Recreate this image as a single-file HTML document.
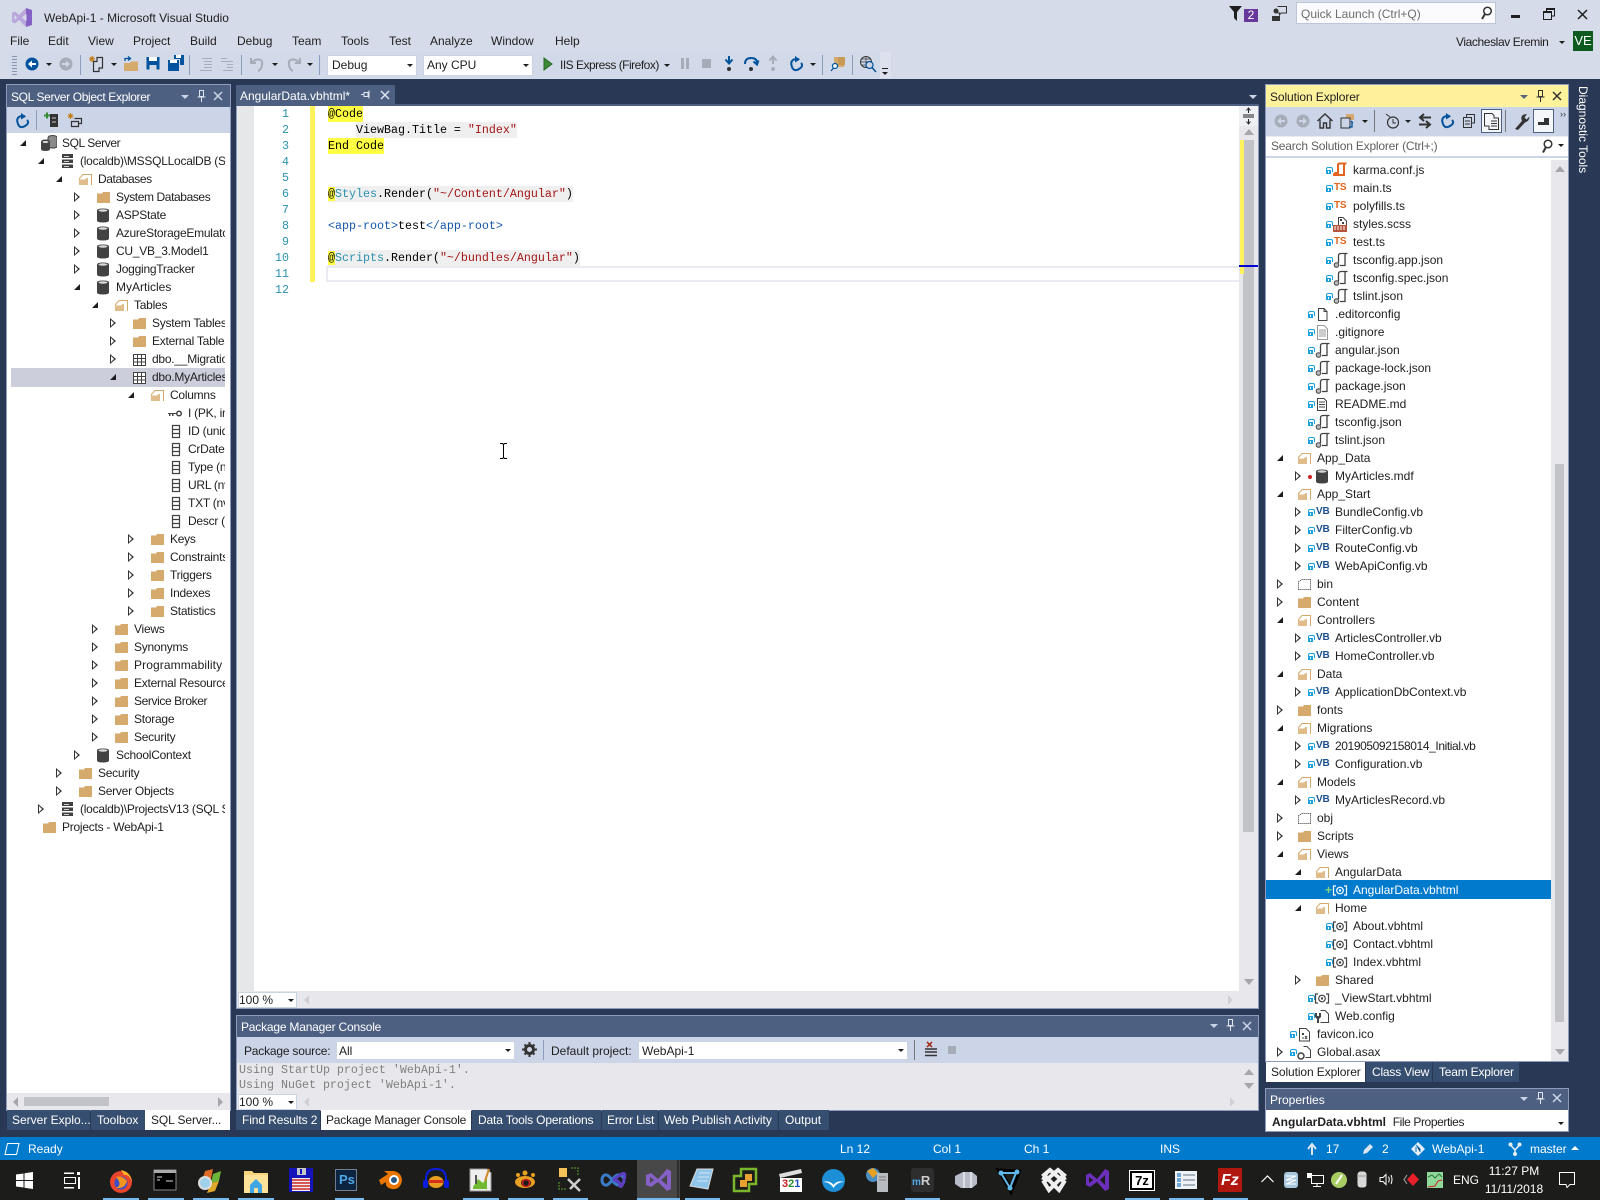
<!DOCTYPE html>
<html lang="en"><head><meta charset="utf-8"><title>WebApi-1 - Microsoft Visual Studio</title>
<style>
*{box-sizing:border-box}
html,body{margin:0;padding:0}
body{width:1600px;height:1200px;overflow:hidden;background:#293955;font:12px/16px "Liberation Sans",sans-serif;color:#1e1e1e;position:relative}
.a{position:absolute;white-space:nowrap}
.b{position:absolute}
svg{position:absolute;overflow:visible}
.w{color:#fff}
.t{position:absolute;height:18px;line-height:18px;white-space:nowrap;color:#1e1e1e}
.t i{position:absolute;display:block}
.lt .t{letter-spacing:-.25px}
.e{left:-42px;top:6px;width:6px;height:6px;background:#1e1e1e;clip-path:polygon(100% 0,100% 100%,0 100%)}
.c{left:-42px;top:4px;width:0;height:0;border-left:6px solid #333;border-top:5px solid transparent;border-bottom:5px solid transparent}
.c:after{content:"";position:absolute;left:-5px;top:-3px;border-left:3px solid #fff;border-top:3px solid transparent;border-bottom:3px solid transparent}
.rt .e,.rt .c{left:-40px}
.t svg{left:-21px;top:1px;width:16px;height:16px}
.k{position:absolute;left:-27px;top:9px;width:5px;height:4px;background:#1ba1e2}
.k:before{content:"";position:absolute;left:0;top:-3px;width:5px;height:4px;border:1px solid #1ba1e2;border-bottom:0;border-radius:2px 2px 0 0}
.k:after{content:"";position:absolute;left:2px;top:1px;width:1px;height:2px;background:#fff}
em{position:absolute;left:-19px;top:0;font:bold 10px/18px "Liberation Sans",sans-serif;letter-spacing:-.2px}
.ts{color:#e2641e}
.vb{color:#1c4f8e}
.cd{position:absolute;left:328px;height:16px;font:11.67px/16px "Liberation Mono",monospace;white-space:pre;color:#000}
.ln{position:absolute;left:260px;width:29px;text-align:right;height:16px;font:11.67px/16px "Liberation Mono",monospace;color:#2b91af}
.tab{position:absolute;top:1110px;height:20px;background:#364e6f;color:#fff;line-height:20px;padding-left:5px;white-space:nowrap}
.act{background:#fff;color:#1e1e1e}
.sep{position:absolute;width:1px;background:#8e9bbc}
.tri{position:absolute;width:0;height:0;border-left:3px solid transparent;border-right:3px solid transparent;border-top:3px solid #1e1e1e}
.ul{position:absolute;top:1198px;height:2px;background:#76b9ed}
</style></head><body>
<svg width="0" height="0" style="left:0;top:0"><defs>
<symbol id="f" viewBox="0 0 16 16"><path d="M2 4.500 L7 4.500 L8 3 L15 3 L15 14 L2 14Z" fill="#d6aa6c"/></symbol>
<symbol id="o" viewBox="0 0 16 16"><path d="M2.500 14V7.500L6 3.500H14.500V14" fill="none" stroke="#d6aa6c"/><path d="M2 14V8.500H8L9.500 7H11V14Z" fill="#e0bc8a"/></symbol>
<symbol id="d" viewBox="0 0 16 16"><path d="M2 3.500Q2 1.500 8 1.500T14 3.500V13.500Q14 15.500 8 15.500T2 13.500Z" fill="#424242"/><ellipse cx="8" cy="3.500" rx="4.500" ry="1.300" fill="#d8d8d8"/></symbol>
<symbol id="s" viewBox="0 0 16 16"><rect x="3" y="1" width="11" height="14" fill="#424242"/><rect x="3" y="5" width="11" height="1.500" fill="#fff"/><rect x="3" y="10" width="11" height="1.500" fill="#fff"/><rect x="5" y="3" width="5" height="1" fill="#ccc"/><rect x="5" y="8" width="5" height="1" fill="#ccc"/><rect x="5" y="13" width="5" height="1" fill="#ccc"/></symbol>
<symbol id="q" viewBox="0 0 16 16"><path d="M7 3Q7 .5 11.500 .5T16 3V11Q16 13 11.500 13T7 11Z" fill="#8a8a8a" stroke="#424242"/><path d="M0 7Q0 4.500 4.500 4.500T9 7V14Q9 16 4.500 16T0 14Z" fill="#424242"/><ellipse cx="4.500" cy="7" rx="3" ry="1" fill="#ddd"/></symbol>
<symbol id="tb" viewBox="0 0 16 16"><path d="M2.500 3.500H14.500V14.500H2.500ZM2.500 7.500H14.500M2.500 11H14.500M6.500 3.500V14.500M10.500 3.500V14.500" fill="#fff" stroke="#424242"/></symbol>
<symbol id="cl" viewBox="0 0 16 16"><path d="M5.500 2.500H12.500V14.500H5.500ZM5.500 6.500H12.500M5.500 10.500H12.500" fill="#fff" stroke="#424242" stroke-width="1.200"/></symbol>
<symbol id="ky" viewBox="0 0 16 16"><circle cx="12" cy="8.500" r="2.300" fill="none" stroke="#424242" stroke-width="1.500"/><path d="M1 8H10V9H1ZM2 9H3.500V11H2ZM5 9H6.500V11H5Z" fill="#424242"/></symbol>
<symbol id="jn" viewBox="0 0 16 16"><path d="M6.500 11V4Q6.500 1.500 9 1.500H15.500M14 1.500Q13 1.500 13 3.500V13.500H8" fill="none" stroke="#424242" stroke-width="1.300"/><circle cx="4.500" cy="13" r="2.300" fill="#bbb" stroke="#424242"/></symbol>
<symbol id="ka" viewBox="0 0 16 16"><path d="M6 12V3Q6 1.500 7.500 1.500H14.500M13 1.500Q12 1.500 12 3.500V13H2Q2 11 4 11H7" fill="none" stroke="#e2641e" stroke-width="2"/></symbol>
<symbol id="dc" viewBox="0 0 16 16"><path d="M4.500 2.500H10L13 5.500V14.500H4.500ZM10 2.500V5.500H13" fill="#fff" stroke="#424242"/></symbol>
<symbol id="gi" viewBox="0 0 16 16"><path d="M3.500 1.500H10L13.500 5V15.500H3.500Z" fill="#fff" stroke="#999"/><path d="M5 6H12M5 8H12M5 10H12M5 12H12" stroke="#999"/></symbol>
<symbol id="rd" viewBox="0 0 16 16"><path d="M3.500 2.500H10L12.500 5V14.500H3.500Z" fill="#fff" stroke="#424242"/><path d="M5 6H11M5 8.500H11M5 11H11" stroke="#424242"/></symbol>
<symbol id="sa" viewBox="0 0 16 16"><path d="M6.500 1.500H11L14.500 5V10H6.500Z" fill="#fff" stroke="#424242"/><rect x="8" y="3" width="2" height="2" fill="#424242"/><rect x="10" y="6" width="2" height="2" fill="#424242"/><rect x="1" y="9" width="14" height="7" fill="#b5533c"/><path d="M2 11H14M2 13H14" stroke="#fff" stroke-dasharray="2 1"/></symbol>
<symbol id="rz" viewBox="0 0 16 16"><path d="M4 4H1.500V13H4M12 4H14.500V13H12" fill="none" stroke="#424242" stroke-width="1.200"/><circle cx="8" cy="8.500" r="3.300" fill="none" stroke="#424242" stroke-width="1.200"/><circle cx="8" cy="8.500" r="1.200" fill="#424242"/></symbol>
<symbol id="rw" viewBox="0 0 16 16"><path d="M4 4H1.500V13H4M12 4H14.500V13H12" fill="none" stroke="#fff" stroke-width="1.200"/><circle cx="8" cy="8.500" r="3.300" fill="none" stroke="#fff" stroke-width="1.200"/><circle cx="8" cy="8.500" r="1.200" fill="#fff"/></symbol>
<symbol id="cg" viewBox="0 0 16 16"><path d="M6.500 2.500H11L14.500 6V14.500H6.500" fill="#fff" stroke="#424242"/><path d="M1 5H3V8H5V5H7V9L5 11V15H3V11L1 9Z" fill="#424242"/></symbol>
<symbol id="ic" viewBox="0 0 16 16"><path d="M3.500 2.500H10L13.500 6V15H3.500Z" fill="#fff" stroke="#424242"/><rect x="6" y="7" width="2" height="2" fill="#424242"/><path d="M9 10L11 13M11 10L9 13M6 12H8" stroke="#424242"/></symbol>
<symbol id="as" viewBox="0 0 16 16"><path d="M7.500 2.500H11L14.500 6V13.500H9.500" fill="#fff" stroke="#424242"/><circle cx="5" cy="12" r="3" fill="#fff" stroke="#424242" stroke-width="1.500"/></symbol>
<symbol id="bi" viewBox="0 0 16 16"><path d="M2.500 6L5.500 3.500H14.500V13.500H2.500Z" fill="#fff" stroke="#333" stroke-dasharray="1 1"/></symbol>
</defs></svg>

<!-- title bar -->
<div class="b" style="left:0;top:0;width:1600px;height:79px;background:#d6dbe9"></div>
<svg style="left:11px;top:7px" width="22" height="21" viewBox="0 0 22 21"><path d="M1 6L4 4.500L8 8L15 1V7L11 10.500L15 14V20L8 13L4 16.500L1 15Z" fill="#b9a6dc"/><path d="M15 1L21 3V18L15 20V14L15.500 13.500V7.500L15 7Z" fill="#8661c5"/><path d="M3.500 8V13L6 10.500Z" fill="#d6dbe9"/></svg>
<div class="a" style="left:44px;top:10px">WebApi-1 - Microsoft Visual Studio</div>
<div class="a" style="left:10px;top:33px">File</div>
<div class="a" style="left:48px;top:33px">Edit</div>
<div class="a" style="left:88px;top:33px">View</div>
<div class="a" style="left:133px;top:33px">Project</div>
<div class="a" style="left:190px;top:33px">Build</div>
<div class="a" style="left:237px;top:33px">Debug</div>
<div class="a" style="left:292px;top:33px">Team</div>
<div class="a" style="left:341px;top:33px">Tools</div>
<div class="a" style="left:389px;top:33px">Test</div>
<div class="a" style="left:430px;top:33px">Analyze</div>
<div class="a" style="left:491px;top:33px">Window</div>
<div class="a" style="left:555px;top:33px">Help</div>

<svg style="left:1229px;top:6px" width="14" height="15" viewBox="0 0 14 15"><path d="M0 0H13L8 6V15L5 12V6Z" fill="#1e1e1e"/></svg>
<div class="a w" style="left:1244px;top:9px;width:14px;height:13px;background:#68379c;text-align:center;line-height:13px">2</div>
<svg style="left:1271px;top:6px" width="17" height="15" viewBox="0 0 17 15"><circle cx="5" cy="5" r="2.500" fill="#333"/><path d="M1 15V10H9V15Z" fill="#333"/><path d="M6.500 .5H15.500V7H10L8.500 9V7H6.500" fill="none" stroke="#333"/></svg>
<div class="b" style="left:1296px;top:2px;width:200px;height:22px;background:#fbfbfd;border:1px solid #bcc5d9"></div>
<div class="a" style="left:1301px;top:6px;color:#6d6d6d">Quick Launch (Ctrl+Q)</div>
<svg style="left:1479px;top:6px" width="14" height="14" viewBox="0 0 14 14"><circle cx="8.500" cy="5" r="3.800" fill="none" stroke="#333" stroke-width="1.500"/><path d="M6 8L3 13" stroke="#333" stroke-width="2"/></svg>
<div class="b" style="left:1511px;top:15px;width:9px;height:3px;background:#1e1e1e"></div>
<svg style="left:1543px;top:8px" width="12" height="12" viewBox="0 0 12 12"><path d="M3.500 3V.5H11.500V8H9M.5 3.500H8.500V11.500H.5Z" fill="none" stroke="#1e1e1e"/><path d="M0 3H9V5H0ZM3 0H12V2H3Z" fill="#1e1e1e"/></svg>
<svg style="left:1577px;top:9px" width="11" height="11" viewBox="0 0 11 11"><path d="M1 1L10 10M10 1L1 10" stroke="#1e1e1e" stroke-width="1.500"/></svg>
<div class="a" style="left:1456px;top:34px;letter-spacing:-.4px">Viacheslav Eremin</div>
<div class="tri" style="left:1559px;top:41px"></div>
<div class="a w" style="left:1573px;top:31px;width:20px;height:20px;background:#0c5a1e;text-align:center;line-height:19px;font-size:13px">VE</div>

<!-- main toolbar -->
<div class="b" style="left:9px;top:52px;width:871px;height:26px;background:#d2d9e8"></div>
<div class="b" style="left:880px;top:52px;width:11px;height:26px;background:#dde1ed"></div>
<div class="b" style="left:12px;top:56px;width:5px;height:20px;background:repeating-linear-gradient(#8a94aa 0 1px,transparent 1px 3px)"></div>
<svg style="left:24px;top:56px" width="16" height="16" viewBox="0 0 16 16"><circle cx="8" cy="8" r="6.500" fill="#00539c"/><path d="M12 7H8V4.500L4 8L8 11.500V9H12Z" fill="#fff"/></svg>
<div class="tri" style="left:46px;top:63px"></div>
<svg style="left:58px;top:56px" width="16" height="16" viewBox="0 0 16 16"><circle cx="8" cy="8" r="6.500" fill="#a6adb9"/><path d="M4 7H8V4.500L12 8L8 11.500V9H4Z" fill="#cfd6e6"/></svg>
<div class="sep" style="left:80px;top:55px;height:20px"></div>
<svg style="left:88px;top:55px" width="17" height="18" viewBox="0 0 17 18"><path d="M5.500 6.500H9V2.500H14.500V13H11V16.500H5.500Z" fill="none" stroke="#333" stroke-width="1.200"/><path d="M4 1V7M1 4H7M2 2L6 6M6 2L2 6" stroke="#c27d1a" stroke-width="1.100"/></svg>
<div class="tri" style="left:111px;top:63px"></div>
<svg style="left:123px;top:56px" width="16" height="16" viewBox="0 0 16 16"><path d="M1 15V7H7L8 5.500H15V15Z" fill="#d6aa6c"/><path d="M2 5V2.500H7M5 .5L7.500 2.500L5 4.500" fill="none" stroke="#00539c" stroke-width="1.300"/></svg>
<svg style="left:146px;top:56px" width="14" height="14" viewBox="0 0 14 14"><path d="M.5 1H13.500V13.500H.5Z" fill="#00539c"/><rect x="3" y="1" width="8" height="4" fill="#fff"/><rect x="3.500" y="9" width="7" height="4.500" fill="#cfd6e6"/></svg>
<svg style="left:168px;top:55px" width="16" height="16" viewBox="0 0 16 16"><path d="M6 0H16V10H12V4H6Z" fill="#00539c"/><rect x="8" y="0" width="5" height="3" fill="#fff"/><rect x="0" y="5" width="11" height="11" fill="#00539c"/><rect x="2" y="5" width="7" height="3" fill="#fff"/></svg>
<div class="sep" style="left:189px;top:55px;height:20px"></div>
<svg style="left:199px;top:57px" width="14" height="14" viewBox="0 0 14 14"><path d="M3 1.500H13M5 4.500H13M5 7.500H13M5 10.500H13M1 13.500H13" stroke="#a6adb9"/></svg>
<svg style="left:220px;top:57px" width="14" height="14" viewBox="0 0 14 14"><path d="M1 1.500H7M1 4.500H13M7 7.500H13M7 10.500H13M3 13.500H13" stroke="#a6adb9"/></svg>
<div class="sep" style="left:241px;top:55px;height:20px"></div>
<svg style="left:250px;top:56px" width="15" height="16" viewBox="0 0 15 16"><path d="M1 2V7H6M2 6.500Q5 3 9 3.500T12 9T8 15" fill="none" stroke="#a6adb9" stroke-width="2"/></svg>
<div class="tri" style="left:272px;top:63px"></div>
<svg style="left:286px;top:56px" width="15" height="16" viewBox="0 0 15 16"><path d="M14 2V7H9M13 6.500Q10 3 6 3.500T3 9T7 15" fill="none" stroke="#a6adb9" stroke-width="2"/></svg>
<div class="tri" style="left:307px;top:63px"></div>
<div class="sep" style="left:319px;top:55px;height:20px"></div>
<div class="b" style="left:327px;top:55px;width:90px;height:21px;background:#fff;border:1px solid #ccd3e2"></div>
<div class="a" style="left:332px;top:57px">Debug</div>
<div class="tri" style="left:407px;top:64px"></div>
<div class="b" style="left:423px;top:55px;width:110px;height:21px;background:#fff;border:1px solid #ccd3e2"></div>
<div class="a" style="left:427px;top:57px">Any CPU</div>
<div class="tri" style="left:523px;top:64px"></div>
<svg style="left:543px;top:57px" width="10" height="14" viewBox="0 0 10 14"><path d="M1 1L9 7L1 13Z" fill="#388a34" stroke="#2a6b28"/></svg>
<div class="a" style="left:560px;top:57px;letter-spacing:-.5px">IIS Express (Firefox)</div>
<div class="tri" style="left:664px;top:64px"></div>
<div class="b" style="left:681px;top:58px;width:3px;height:11px;background:#a6adb9"></div><div class="b" style="left:686px;top:58px;width:3px;height:11px;background:#a6adb9"></div>
<div class="b" style="left:702px;top:59px;width:9px;height:9px;background:#a6adb9"></div>
<svg style="left:723px;top:56px" width="12" height="16" viewBox="0 0 12 16"><path d="M6 0V6M2.500 3.500L6 7.500L9.500 3.500" fill="none" stroke="#00539c" stroke-width="2"/><circle cx="6" cy="13" r="2" fill="#333"/></svg>
<svg style="left:743px;top:56px" width="16" height="16" viewBox="0 0 16 16"><path d="M2 8Q2 2 8 2T14 7M10.500 5.500L14 8.500L15.500 4.500" fill="none" stroke="#00539c" stroke-width="2"/><circle cx="8" cy="13" r="2" fill="#333"/></svg>
<svg style="left:767px;top:56px" width="12" height="16" viewBox="0 0 12 16"><path d="M6 8V1M2.500 4.500L6 .5L9.500 4.500" fill="none" stroke="#a6adb9" stroke-width="2"/><circle cx="6" cy="13" r="2" fill="#a6adb9"/></svg>
<svg style="left:789px;top:56px" width="14" height="16" viewBox="0 0 14 16"><path d="M10 3.500Q7 2 4 4T3 11T10 13T12 7" fill="none" stroke="#00539c" stroke-width="2"/><path d="M6 0L11 3.500L6 6.500Z" fill="#00539c"/></svg>
<div class="tri" style="left:810px;top:63px"></div>
<div class="sep" style="left:822px;top:55px;height:20px"></div>
<svg style="left:830px;top:56px" width="16" height="16" viewBox="0 0 16 16"><path d="M4 1H14V11H4Z" fill="#d6aa6c"/><path d="M8 1H15V9H8Z" fill="#c99a55"/><circle cx="5" cy="10" r="2.500" fill="#fff" stroke="#00539c" stroke-width="1.200"/><path d="M3.500 12L1 15" stroke="#00539c" stroke-width="1.300"/></svg>
<div class="sep" style="left:852px;top:55px;height:20px"></div>
<svg style="left:860px;top:56px" width="17" height="17" viewBox="0 0 17 17"><circle cx="6" cy="6" r="5.500" fill="none" stroke="#333"/><path d="M1 6H11M6 1V11M2 3H10M2 9H10" stroke="#333" stroke-width=".7"/><circle cx="9.500" cy="9" r="3.500" fill="#cfd6e6" stroke="#00539c" stroke-width="1.200"/><path d="M12 11.500L16 16" stroke="#00539c" stroke-width="1.500"/></svg>
<div class="b" style="left:882px;top:68px;width:6px;height:1px;background:#1e1e1e"></div><div class="tri" style="left:882px;top:72px"></div>

<!-- SQL Server Object Explorer -->
<div class="b" style="left:6px;top:84px;width:225px;height:1027px;background:#fff;border:1px solid #8e9bbc"></div>
<div class="b" style="left:7px;top:85px;width:223px;height:22px;background:#4d6082"></div>
<div class="a w" style="left:11px;top:89px;letter-spacing:-.35px">SQL Server Object Explorer</div>
<div class="b" style="left:181px;top:95px;border-left:4px solid transparent;border-right:4px solid transparent;border-top:4px solid #ccd5e8"></div>
<svg style="left:197px;top:90px" width="9" height="12" viewBox="0 0 9 12"><path d="M2.500 .5H6.500V6.500H2.500ZM.5 7H8.500M4.500 7V12" fill="none" stroke="#e0e5f0"/></svg>
<svg style="left:213px;top:91px" width="10" height="10" viewBox="0 0 10 10"><path d="M1 1L9 9M9 1L1 9" stroke="#ccd5e8" stroke-width="1.500"/></svg>
<div class="b" style="left:7px;top:107px;width:223px;height:26px;background:#ccd5e8"></div>
<svg style="left:15px;top:113px" width="14" height="16" viewBox="0 0 14 16"><path d="M10 3.500Q7 2 4 4T3 11T10 13T12 7" fill="none" stroke="#00539c" stroke-width="2"/><path d="M6 0L11 3.500L6 6.500Z" fill="#00539c"/></svg>
<div class="sep" style="left:36px;top:110px;height:20px"></div>
<svg style="left:44px;top:112px" width="16" height="16" viewBox="0 0 16 16"><rect x="6" y="2" width="8" height="13" fill="#333"/><path d="M0 3.500H6M3 .5V6.500" stroke="#388a34" stroke-width="2"/><path d="M8 6H12M8 10H12" stroke="#ccc"/></svg>
<svg style="left:67px;top:112px" width="16" height="16" viewBox="0 0 16 16"><path d="M3.500 1V7M.5 4H6.500M1.500 2L5.500 6M5.500 2L1.500 6" stroke="#c27d1a"/><path d="M7.500 6.500H14.500V11.500H12M4.500 9.500H11.500V14.500H4.500Z" fill="none" stroke="#333" stroke-width="1.200"/></svg>

<div class="b lt" style="left:0;top:0;width:225px;height:1093px;overflow:hidden">
<div class="b" style="left:11px;top:368px;width:214px;height:19px;background:#cccedb"></div>
<div class="t" style="left:62px;top:134px;letter-spacing:-.4px"><i class="e"></i><svg><use href="#q"/></svg>SQL Server</div>
<div class="t" style="left:80px;top:152px"><i class="e"></i><svg><use href="#s"/></svg>(localdb)\MSSQLLocalDB (SQL Server 13.0)</div>
<div class="t" style="left:98px;top:170px;letter-spacing:-.4px"><i class="e"></i><svg><use href="#o"/></svg>Databases</div>
<div class="t" style="left:116px;top:188px;letter-spacing:-.4px"><i class="c"></i><svg><use href="#f"/></svg>System Databases</div>
<div class="t" style="left:116px;top:206px"><i class="c"></i><svg><use href="#d"/></svg>ASPState</div>
<div class="t" style="left:116px;top:224px"><i class="c"></i><svg><use href="#d"/></svg>AzureStorageEmulatorDb</div>
<div class="t" style="left:116px;top:242px"><i class="c"></i><svg><use href="#d"/></svg>CU_VB_3.Model1</div>
<div class="t" style="left:116px;top:260px"><i class="c"></i><svg><use href="#d"/></svg>JoggingTracker</div>
<div class="t" style="left:116px;top:278px;letter-spacing:0"><i class="e"></i><svg><use href="#d"/></svg>MyArticles</div>
<div class="t" style="left:134px;top:296px"><i class="e"></i><svg><use href="#o"/></svg>Tables</div>
<div class="t" style="left:152px;top:314px"><i class="c"></i><svg><use href="#f"/></svg>System Tables</div>
<div class="t" style="left:152px;top:332px"><i class="c"></i><svg><use href="#f"/></svg>External Tables</div>
<div class="t" style="left:152px;top:350px"><i class="c"></i><svg><use href="#tb"/></svg>dbo.__MigrationHistory</div>
<div class="t" style="left:152px;top:368px"><i class="e"></i><svg><use href="#tb"/></svg>dbo.MyArticles</div>
<div class="t" style="left:170px;top:386px"><i class="e"></i><svg><use href="#o"/></svg>Columns</div>
<div class="t" style="left:188px;top:404px"><svg><use href="#ky"/></svg>I (PK, int)</div>
<div class="t" style="left:188px;top:422px"><svg><use href="#cl"/></svg>ID (uniqueidentifier)</div>
<div class="t" style="left:188px;top:440px"><svg><use href="#cl"/></svg>CrDate (date)</div>
<div class="t" style="left:188px;top:458px"><svg><use href="#cl"/></svg>Type (nvarchar)</div>
<div class="t" style="left:188px;top:476px"><svg><use href="#cl"/></svg>URL (nvarchar)</div>
<div class="t" style="left:188px;top:494px"><svg><use href="#cl"/></svg>TXT (nvarchar)</div>
<div class="t" style="left:188px;top:512px"><svg><use href="#cl"/></svg>Descr (nvarchar)</div>
<div class="t" style="left:170px;top:530px"><i class="c"></i><svg><use href="#f"/></svg>Keys</div>
<div class="t" style="left:170px;top:548px"><i class="c"></i><svg><use href="#f"/></svg>Constraints</div>
<div class="t" style="left:170px;top:566px"><i class="c"></i><svg><use href="#f"/></svg>Triggers</div>
<div class="t" style="left:170px;top:584px"><i class="c"></i><svg><use href="#f"/></svg>Indexes</div>
<div class="t" style="left:170px;top:602px"><i class="c"></i><svg><use href="#f"/></svg>Statistics</div>
<div class="t" style="left:134px;top:620px"><i class="c"></i><svg><use href="#f"/></svg>Views</div>
<div class="t" style="left:134px;top:638px"><i class="c"></i><svg><use href="#f"/></svg>Synonyms</div>
<div class="t" style="left:134px;top:656px;letter-spacing:.1px"><i class="c"></i><svg><use href="#f"/></svg>Programmability</div>
<div class="t" style="left:134px;top:674px"><i class="c"></i><svg><use href="#f"/></svg>External Resources</div>
<div class="t" style="left:134px;top:692px;letter-spacing:-.4px"><i class="c"></i><svg><use href="#f"/></svg>Service Broker</div>
<div class="t" style="left:134px;top:710px"><i class="c"></i><svg><use href="#f"/></svg>Storage</div>
<div class="t" style="left:134px;top:728px"><i class="c"></i><svg><use href="#f"/></svg>Security</div>
<div class="t" style="left:116px;top:746px"><i class="c"></i><svg><use href="#d"/></svg>SchoolContext</div>
<div class="t" style="left:98px;top:764px"><i class="c"></i><svg><use href="#f"/></svg>Security</div>
<div class="t" style="left:98px;top:782px"><i class="c"></i><svg><use href="#f"/></svg>Server Objects</div>
<div class="t" style="left:80px;top:800px"><i class="c"></i><svg><use href="#s"/></svg>(localdb)\ProjectsV13 (SQL Server)</div>
<div class="t" style="left:62px;top:818px"><svg><use href="#f"/></svg>Projects - WebApi-1</div>
</div>
<div class="b" style="left:7px;top:1093px;width:223px;height:17px;background:#e8e8ec"></div>
<div class="b" style="left:24px;top:1097px;width:85px;height:9px;background:#c2c3c9"></div>
<div class="b" style="left:13px;top:1097px;border-right:5px solid #a6a6ad;border-top:5px solid transparent;border-bottom:5px solid transparent"></div>
<div class="b" style="left:218px;top:1097px;border-left:5px solid #a6a6ad;border-top:5px solid transparent;border-bottom:5px solid transparent"></div>
<div class="tab" style="left:7px;width:83px">Server Explo...</div>
<div class="tab" style="left:91px;width:54px;padding-left:6px">Toolbox</div>
<div class="tab act" style="left:145px;width:85px;padding-left:6px;letter-spacing:-.1px">SQL Server...</div>

<!-- Editor -->
<div class="b" style="left:236px;top:85px;width:159px;height:21px;background:#4d6082"></div>
<div class="a w" style="left:240px;top:88px">AngularData.vbhtml*</div>
<svg style="left:361px;top:90px" width="10" height="10" viewBox="0 0 10 10"><path d="M3 2.500H7V6.500H3ZM0 4.500H3M8 .5V8.500" fill="none" stroke="#e0e5f0"/></svg>
<svg style="left:380px;top:90px" width="10" height="10" viewBox="0 0 10 10"><path d="M1 1L9 9M9 1L1 9" stroke="#e0e5f0" stroke-width="1.500"/></svg>
<div class="b" style="left:1249px;top:95px;border-left:4px solid transparent;border-right:4px solid transparent;border-top:4px solid #ccd5e8"></div>
<div class="b" style="left:236px;top:104px;width:1023px;height:2px;background:#4d6082"></div>
<div class="b" style="left:236px;top:106px;width:1023px;height:903px;background:#fff;border:1px solid #8e9bbc;border-top:0"></div>
<div class="b" style="left:237px;top:106px;width:17px;height:885px;background:#e6e7e8"></div>
<div class="b" style="left:310px;top:106px;width:5px;height:176px;background:#fff35c"></div>
<div class="b" style="left:326px;top:266px;width:913px;height:16px;border:2px solid #eaeaf2;border-right:0"></div>
<div class="ln" style="top:106px">1</div><div class="ln" style="top:122px">2</div><div class="ln" style="top:138px">3</div><div class="ln" style="top:154px">4</div><div class="ln" style="top:170px">5</div><div class="ln" style="top:186px">6</div><div class="ln" style="top:202px">7</div><div class="ln" style="top:218px">8</div><div class="ln" style="top:234px">9</div><div class="ln" style="top:250px">10</div><div class="ln" style="top:266px">11</div><div class="ln" style="top:282px">12</div>
<div class="cd" style="top:106px;background:#ffff44">@Code</div>
<div class="cd" style="top:122px;left:356px;background:#efefef">ViewBag.Title = <span style="color:#a31515">"Index"</span></div>
<div class="cd" style="top:138px;background:#ffff44">End Code</div>
<div class="cd" style="top:186px;background:#efefef"><span style="background:#ffff44">@</span><span style="color:#2b91af">Styles</span>.Render(<span style="color:#a31515">"~/Content/Angular"</span>)</div>
<div class="cd" style="top:218px"><span style="color:#1557a8">&lt;app-root&gt;</span>test<span style="color:#1557a8">&lt;/app-root&gt;</span></div>
<div class="cd" style="top:250px;background:#efefef"><span style="background:#ffff44">@</span><span style="color:#2b91af">Scripts</span>.Render(<span style="color:#a31515">"~/bundles/Angular"</span>)</div>
<svg style="left:500px;top:443px" width="7" height="16" viewBox="0 0 7 16"><path d="M0 .5H2.500L3.500 1.500L4.500 .5H7M3.500 1.500V14.500M0 15.500H2.500L3.500 14.500L4.500 15.500H7" fill="none" stroke="#000"/></svg>
<!-- editor scrollbar -->
<div class="b" style="left:1239px;top:106px;width:19px;height:885px;background:#e8e8ec"></div>
<div class="b" style="left:1239px;top:106px;width:19px;height:20px;background:#eef0f6"></div>
<svg style="left:1243px;top:108px" width="11" height="16" viewBox="0 0 11 16"><path d="M0 7H11M0 9H11M5.500 0V5M5.500 11V16M3.500 2.500L5.500 0L7.500 2.500M3.500 13.500L5.500 16L7.500 13.500" fill="none" stroke="#1e1e1e"/></svg>
<div class="b" style="left:1244px;top:129px;border-left:5px solid transparent;border-right:5px solid transparent;border-bottom:6px solid #a6a6ad"></div>
<div class="b" style="left:1243px;top:140px;width:11px;height:692px;background:#c2c3c9"></div>
<div class="b" style="left:1240px;top:140px;width:4px;height:134px;background:#fff35c"></div>
<div class="b" style="left:1239px;top:265px;width:19px;height:2px;background:#0000d0"></div>
<div class="b" style="left:1244px;top:979px;border-left:5px solid transparent;border-right:5px solid transparent;border-top:6px solid #a6a6ad"></div>
<!-- editor h scrollbar -->
<div class="b" style="left:237px;top:991px;width:1021px;height:17px;background:#e8e8ec"></div>
<div class="b" style="left:238px;top:992px;width:59px;height:16px;background:#fff;border:1px solid #ccd3e2"></div>
<div class="a" style="left:239px;top:992px">100 %</div><div class="tri" style="left:288px;top:999px"></div>
<div class="b" style="left:304px;top:995px;border-right:5px solid #d0d0d6;border-top:5px solid transparent;border-bottom:5px solid transparent"></div>
<div class="b" style="left:1228px;top:995px;border-left:5px solid #d0d0d6;border-top:5px solid transparent;border-bottom:5px solid transparent"></div>

<!-- Package Manager Console -->
<div class="b" style="left:236px;top:1015px;width:1023px;height:96px;background:#e8e8ec;border:1px solid #8e9bbc"></div>
<div class="b" style="left:237px;top:1016px;width:1021px;height:21px;background:#4d6082"></div>
<div class="a w" style="left:241px;top:1019px;letter-spacing:-.2px">Package Manager Console</div>
<div class="b" style="left:1210px;top:1024px;border-left:4px solid transparent;border-right:4px solid transparent;border-top:4px solid #ccd5e8"></div>
<svg style="left:1226px;top:1019px" width="9" height="12" viewBox="0 0 9 12"><path d="M2.500 .5H6.500V6.500H2.500ZM.5 7H8.500M4.500 7V12" fill="none" stroke="#e0e5f0"/></svg>
<svg style="left:1242px;top:1021px" width="10" height="10" viewBox="0 0 10 10"><path d="M1 1L9 9M9 1L1 9" stroke="#ccd5e8" stroke-width="1.500"/></svg>
<div class="b" style="left:237px;top:1037px;width:1021px;height:26px;background:#ccd5e8"></div>
<div class="a" style="left:244px;top:1043px;letter-spacing:-.2px">Package source:</div>
<div class="b" style="left:336px;top:1041px;width:179px;height:19px;background:#fff;border:1px solid #ccd3e2"></div>
<div class="a" style="left:339px;top:1043px">All</div><div class="tri" style="left:505px;top:1049px"></div>
<svg style="left:522px;top:1042px" width="15" height="15" viewBox="0 0 15 15"><circle cx="7.500" cy="7.500" r="4" fill="none" stroke="#333" stroke-width="3"/><path d="M7.500 0V3M7.500 12V15M0 7.500H3M12 7.500H15M2.500 2.500L4.500 4.500M10.500 10.500L12.500 12.500M12.500 2.500L10.500 4.500M4.500 10.500L2.500 12.500" stroke="#333" stroke-width="2"/></svg>
<div class="sep" style="left:543px;top:1040px;height:20px"></div>
<div class="a" style="left:551px;top:1043px">Default project:</div>
<div class="b" style="left:638px;top:1041px;width:270px;height:19px;background:#fff;border:1px solid #ccd3e2"></div>
<div class="a" style="left:642px;top:1043px">WebApi-1</div><div class="tri" style="left:898px;top:1049px"></div>
<div class="sep" style="left:914px;top:1040px;height:20px;background:#777"></div>
<svg style="left:924px;top:1042px" width="14" height="15" viewBox="0 0 14 15"><path d="M3 0L8 5M8 0L3 5" stroke="#a1260d" stroke-width="1.500"/><path d="M1 7H13M1 10H13M1 13.500H13" stroke="#333" stroke-width="1.500"/></svg>
<div class="b" style="left:948px;top:1046px;width:8px;height:8px;background:#a6adb9"></div>
<div class="a" style="left:239px;top:1063px;font:11.67px/15px 'Liberation Mono',monospace;color:#808080">Using StartUp project 'WebApi-1'.</div>
<div class="a" style="left:239px;top:1078px;font:11.67px/15px 'Liberation Mono',monospace;color:#808080">Using NuGet project 'WebApi-1'.</div>
<div class="b" style="left:238px;top:1094px;width:59px;height:16px;background:#fff;border:1px solid #ccd3e2"></div>
<div class="a" style="left:239px;top:1094px">100 %</div><div class="tri" style="left:288px;top:1101px"></div>
<div class="b" style="left:304px;top:1097px;border-right:5px solid #d0d0d6;border-top:5px solid transparent;border-bottom:5px solid transparent"></div>
<div class="b" style="left:1244px;top:1069px;border-left:5px solid transparent;border-right:5px solid transparent;border-bottom:6px solid #a6a6ad"></div>
<div class="b" style="left:1244px;top:1083px;border-left:5px solid transparent;border-right:5px solid transparent;border-top:6px solid #a6a6ad"></div>
<div class="b" style="left:1230px;top:1097px;border-left:5px solid #d0d0d6;border-top:5px solid transparent;border-bottom:5px solid transparent"></div>
<div class="tab" style="left:236px;width:84px;padding-left:6px;letter-spacing:-.1px">Find Results 2</div>
<div class="tab act" style="left:321px;width:150px;letter-spacing:-.2px">Package Manager Console</div>
<div class="tab" style="left:472px;width:129px;padding-left:6px;letter-spacing:-.15px">Data Tools Operations</div>
<div class="tab" style="left:602px;width:56px;padding-left:5px;letter-spacing:-.15px">Error List</div>
<div class="tab" style="left:659px;width:119px;padding-left:5px">Web Publish Activity</div>
<div class="tab" style="left:779px;width:50px;padding-left:6px">Output</div>

<!-- Solution Explorer -->
<div class="b" style="left:1265px;top:84px;width:304px;height:978px;background:#fff;border:1px solid #8e9bbc"></div>
<div class="b" style="left:1266px;top:85px;width:302px;height:22px;background:#fff29d"></div>
<div class="a" style="left:1270px;top:89px;letter-spacing:-.1px">Solution Explorer</div>
<div class="b" style="left:1520px;top:95px;border-left:4px solid transparent;border-right:4px solid transparent;border-top:4px solid #5a6478"></div>
<svg style="left:1536px;top:90px" width="9" height="12" viewBox="0 0 9 12"><path d="M2.500 .5H6.500V6.500H2.500ZM.5 7H8.500M4.500 7V12" fill="none" stroke="#333"/></svg>
<svg style="left:1552px;top:91px" width="10" height="10" viewBox="0 0 10 10"><path d="M1 1L9 9M9 1L1 9" stroke="#333" stroke-width="1.500"/></svg>
<div class="b" style="left:1266px;top:107px;width:302px;height:29px;background:#ccd5e8"></div>
<svg style="left:1274px;top:114px" width="14" height="14" viewBox="0 0 14 14"><circle cx="7" cy="7" r="6.500" fill="#a6adb9"/><path d="M11 6H7V3.500L3 7L7 10.500V8H11Z" fill="#ccd5e8"/></svg>
<svg style="left:1296px;top:114px" width="14" height="14" viewBox="0 0 14 14"><circle cx="7" cy="7" r="6.500" fill="#a6adb9"/><path d="M3 6H7V3.500L11 7L7 10.500V8H3Z" fill="#ccd5e8"/></svg>
<svg style="left:1317px;top:113px" width="16" height="16" viewBox="0 0 16 16"><path d="M.5 8L8 1L15.500 8M3 6.500V15H6.500V10H9.500V15H13V6.500" fill="none" stroke="#333" stroke-width="1.400"/></svg>
<svg style="left:1340px;top:113px" width="16" height="16" viewBox="0 0 16 16"><path d="M6 1H14V7H6Z" fill="#d6aa6c"/><rect x="1" y="5" width="9" height="10" fill="#ccd5e8" stroke="#333"/><path d="M12 9V14H9M11 8L13 10" stroke="#00539c" fill="none" stroke-width="1.300"/></svg>
<div class="tri" style="left:1362px;top:120px"></div>
<div class="sep" style="left:1374px;top:110px;height:22px;background:#777"></div>
<svg style="left:1385px;top:113px" width="14" height="16" viewBox="0 0 14 16"><circle cx="8" cy="9.500" r="5.500" fill="none" stroke="#333" stroke-width="1.200"/><path d="M8 6V10H11M1 1L5 4" stroke="#333" fill="none"/></svg>
<div class="tri" style="left:1405px;top:120px"></div>
<svg style="left:1418px;top:113px" width="14" height="16" viewBox="0 0 14 16"><path d="M13 4.500H3M6 1L2 4.500L6 8M1 11.500H11M8 8L12 11.500L8 15" fill="none" stroke="#333" stroke-width="2"/></svg>
<svg style="left:1440px;top:113px" width="14" height="16" viewBox="0 0 14 16"><path d="M10 3.500Q7 2 4 4T3 11T10 13T12 7" fill="none" stroke="#00539c" stroke-width="2"/><path d="M6 0L11 3.500L6 6.500Z" fill="#00539c"/></svg>
<svg style="left:1463px;top:114px" width="12" height="14" viewBox="0 0 12 14"><path d="M3.500 3.500V.5H11.500V9H8.500M.5 3.500H8.500V13.500H.5ZM2 7H7M2 10H7" fill="none" stroke="#333"/></svg>
<div class="b" style="left:1481px;top:109px;width:21px;height:24px;background:#f5f6fa;border:1px solid #4d6082"></div>
<svg style="left:1484px;top:113px" width="15" height="17" viewBox="0 0 15 17"><path d="M.5 .5H8L10 2.500V5H14.500V16.500H5V13H.5Z" fill="none" stroke="#333"/><path d="M7 8H13M7 10.500H13M7 13H13" stroke="#333"/></svg>
<div class="sep" style="left:1505px;top:110px;height:22px;background:#777"></div>
<svg style="left:1514px;top:113px" width="16" height="17" viewBox="0 0 16 17"><path d="M1 16L8 8Q6 3 10 1.500L13 1L10.500 4.500L12.500 6.500L15.500 3.500Q15.500 8 11 9.500L4 17Z" fill="#333"/></svg>
<div class="b" style="left:1533px;top:109px;width:21px;height:24px;background:#f5f6fa;border:1px solid #4d6082"></div>
<div class="b" style="left:1538px;top:122px;width:11px;height:3px;background:#333"></div><div class="b" style="left:1544px;top:118px;width:5px;height:5px;background:#333"></div>
<div class="a" style="left:1560px;top:110px;font-size:9px;line-height:8px;color:#333">&#8250;&#8250;</div>
<div class="b" style="left:1266px;top:136px;width:302px;height:20px;background:#fff;border-top:1px solid #e8ebf2"></div>
<div class="a" style="left:1271px;top:138px;color:#5f5f5f;letter-spacing:-.2px">Search Solution Explorer (Ctrl+;)</div>
<svg style="left:1540px;top:139px" width="13" height="14" viewBox="0 0 13 14"><circle cx="8" cy="5" r="3.800" fill="none" stroke="#333" stroke-width="1.500"/><path d="M6 8L3 13.500" stroke="#333" stroke-width="2"/></svg>
<div class="tri" style="left:1558px;top:144px"></div>
<div class="b" style="left:1266px;top:156px;width:302px;height:2px;background:#ccd5e8"></div>

<div class="b rt" style="left:0;top:0;width:1551px;height:1061px">
<div class="b" style="left:1266px;top:880px;width:285px;height:19px;background:#007acc"></div>
<div class="t" style="left:1353px;top:161px"><u class="k"></u><svg><use href="#ka"/></svg>karma.conf.js</div>
<div class="t" style="left:1353px;top:179px"><u class="k"></u><em class="ts">TS</em>main.ts</div>
<div class="t" style="left:1353px;top:197px"><u class="k"></u><em class="ts">TS</em>polyfills.ts</div>
<div class="t" style="left:1353px;top:215px"><u class="k"></u><svg><use href="#sa"/></svg>styles.scss</div>
<div class="t" style="left:1353px;top:233px"><u class="k"></u><em class="ts">TS</em>test.ts</div>
<div class="t" style="left:1353px;top:251px"><u class="k"></u><svg><use href="#jn"/></svg>tsconfig.app.json</div>
<div class="t" style="left:1353px;top:269px"><u class="k"></u><svg><use href="#jn"/></svg>tsconfig.spec.json</div>
<div class="t" style="left:1353px;top:287px"><u class="k"></u><svg><use href="#jn"/></svg>tslint.json</div>
<div class="t" style="left:1335px;top:305px"><u class="k"></u><svg><use href="#dc"/></svg>.editorconfig</div>
<div class="t" style="left:1335px;top:323px"><u class="k"></u><svg><use href="#gi"/></svg>.gitignore</div>
<div class="t" style="left:1335px;top:341px"><u class="k"></u><svg><use href="#jn"/></svg>angular.json</div>
<div class="t" style="left:1335px;top:359px"><u class="k"></u><svg><use href="#jn"/></svg>package-lock.json</div>
<div class="t" style="left:1335px;top:377px"><u class="k"></u><svg><use href="#jn"/></svg>package.json</div>
<div class="t" style="left:1335px;top:395px"><u class="k"></u><svg><use href="#rd"/></svg>README.md</div>
<div class="t" style="left:1335px;top:413px"><u class="k"></u><svg><use href="#jn"/></svg>tsconfig.json</div>
<div class="t" style="left:1335px;top:431px"><u class="k"></u><svg><use href="#jn"/></svg>tslint.json</div>
<div class="t" style="left:1317px;top:449px"><i class="e"></i><svg><use href="#o"/></svg>App_Data</div>
<div class="t" style="left:1335px;top:467px"><i class="c"></i><b class="b" style="left:-27px;top:8px;width:4px;height:4px;background:#d02020;border-radius:2px"></b><svg><use href="#d"/></svg>MyArticles.mdf</div>
<div class="t" style="left:1317px;top:485px"><i class="e"></i><svg><use href="#o"/></svg>App_Start</div>
<div class="t" style="left:1335px;top:503px"><i class="c"></i><u class="k"></u><em class="vb">VB</em>BundleConfig.vb</div>
<div class="t" style="left:1335px;top:521px"><i class="c"></i><u class="k"></u><em class="vb">VB</em>FilterConfig.vb</div>
<div class="t" style="left:1335px;top:539px"><i class="c"></i><u class="k"></u><em class="vb">VB</em>RouteConfig.vb</div>
<div class="t" style="left:1335px;top:557px"><i class="c"></i><u class="k"></u><em class="vb">VB</em>WebApiConfig.vb</div>
<div class="t" style="left:1317px;top:575px"><i class="c"></i><svg><use href="#bi"/></svg>bin</div>
<div class="t" style="left:1317px;top:593px"><i class="c"></i><svg><use href="#f"/></svg>Content</div>
<div class="t" style="left:1317px;top:611px"><i class="e"></i><svg><use href="#o"/></svg>Controllers</div>
<div class="t" style="left:1335px;top:629px"><i class="c"></i><u class="k"></u><em class="vb">VB</em>ArticlesController.vb</div>
<div class="t" style="left:1335px;top:647px"><i class="c"></i><u class="k"></u><em class="vb">VB</em>HomeController.vb</div>
<div class="t" style="left:1317px;top:665px"><i class="e"></i><svg><use href="#o"/></svg>Data</div>
<div class="t" style="left:1335px;top:683px"><i class="c"></i><u class="k"></u><em class="vb">VB</em>ApplicationDbContext.vb</div>
<div class="t" style="left:1317px;top:701px"><i class="c"></i><svg><use href="#f"/></svg>fonts</div>
<div class="t" style="left:1317px;top:719px"><i class="e"></i><svg><use href="#o"/></svg>Migrations</div>
<div class="t" style="left:1335px;top:737px;letter-spacing:-.4px"><i class="c"></i><u class="k"></u><em class="vb" style="letter-spacing:-.2px">VB</em>201905092158014_Initial.vb</div>
<div class="t" style="left:1335px;top:755px"><i class="c"></i><u class="k"></u><em class="vb">VB</em>Configuration.vb</div>
<div class="t" style="left:1317px;top:773px"><i class="e"></i><svg><use href="#o"/></svg>Models</div>
<div class="t" style="left:1335px;top:791px"><i class="c"></i><u class="k"></u><em class="vb">VB</em>MyArticlesRecord.vb</div>
<div class="t" style="left:1317px;top:809px"><i class="c"></i><svg><use href="#bi"/></svg>obj</div>
<div class="t" style="left:1317px;top:827px"><i class="c"></i><svg><use href="#f"/></svg>Scripts</div>
<div class="t" style="left:1317px;top:845px"><i class="e"></i><svg><use href="#o"/></svg>Views</div>
<div class="t" style="left:1335px;top:863px"><i class="e"></i><svg><use href="#o"/></svg>AngularData</div>
<div class="t" style="left:1353px;top:881px;color:#fff"><span class="a" style="left:-28px;top:0;color:#7fd67f;font-weight:bold">+</span><svg><use href="#rw"/></svg>AngularData.vbhtml</div>
<div class="t" style="left:1335px;top:899px"><i class="e"></i><svg><use href="#o"/></svg>Home</div>
<div class="t" style="left:1353px;top:917px"><u class="k"></u><svg><use href="#rz"/></svg>About.vbhtml</div>
<div class="t" style="left:1353px;top:935px"><u class="k"></u><svg><use href="#rz"/></svg>Contact.vbhtml</div>
<div class="t" style="left:1353px;top:953px"><u class="k"></u><svg><use href="#rz"/></svg>Index.vbhtml</div>
<div class="t" style="left:1335px;top:971px"><i class="c"></i><svg><use href="#f"/></svg>Shared</div>
<div class="t" style="left:1335px;top:989px"><u class="k"></u><svg><use href="#rz"/></svg>_ViewStart.vbhtml</div>
<div class="t" style="left:1335px;top:1007px"><u class="k"></u><svg><use href="#cg"/></svg>Web.config</div>
<div class="t" style="left:1317px;top:1025px"><u class="k"></u><svg><use href="#ic"/></svg>favicon.ico</div>
<div class="t" style="left:1317px;top:1043px"><i class="c"></i><u class="k"></u><svg><use href="#as"/></svg>Global.asax</div>
</div>
<div class="b" style="left:1551px;top:160px;width:17px;height:901px;background:#e8e8ec"></div>
<div class="b" style="left:1555px;top:464px;width:9px;height:558px;background:#c2c3c9"></div>
<div class="b" style="left:1555px;top:166px;border-left:5px solid transparent;border-right:5px solid transparent;border-bottom:6px solid #a6a6ad"></div>
<div class="b" style="left:1555px;top:1049px;border-left:5px solid transparent;border-right:5px solid transparent;border-top:6px solid #a6a6ad"></div>
<div class="tab act" style="left:1266px;top:1062px;width:99px;height:20px;padding-left:5px;letter-spacing:-.1px">Solution Explorer</div>
<div class="tab" style="left:1366px;top:1062px;width:66px;height:20px;padding-left:6px;letter-spacing:-.2px">Class View</div>
<div class="tab" style="left:1433px;top:1062px;width:86px;height:20px;padding-left:6px;letter-spacing:-.2px">Team Explorer</div>

<!-- Properties -->
<div class="b" style="left:1265px;top:1088px;width:304px;height:44px;background:#fff;border:1px solid #8e9bbc"></div>
<div class="b" style="left:1266px;top:1089px;width:302px;height:21px;background:#4d6082"></div>
<div class="a w" style="left:1270px;top:1092px">Properties</div>
<div class="b" style="left:1520px;top:1097px;border-left:4px solid transparent;border-right:4px solid transparent;border-top:4px solid #ccd5e8"></div>
<svg style="left:1536px;top:1092px" width="9" height="12" viewBox="0 0 9 12"><path d="M2.500 .5H6.500V6.500H2.500ZM.5 7H8.500M4.500 7V12" fill="none" stroke="#e0e5f0"/></svg>
<svg style="left:1552px;top:1093px" width="10" height="10" viewBox="0 0 10 10"><path d="M1 1L9 9M9 1L1 9" stroke="#ccd5e8" stroke-width="1.500"/></svg>
<div class="a" style="left:1272px;top:1114px"><b>AngularData.vbhtml</b>&nbsp; <span style="letter-spacing:-.4px">File Properties</span></div>
<div class="tri" style="left:1558px;top:1122px"></div>

<!-- Diagnostic tools -->
<div class="a w" style="left:1575px;top:86px;writing-mode:vertical-rl;line-height:16px">Diagnostic Tools</div>

<!-- status bar -->
<div class="b" style="left:0;top:1137px;width:1600px;height:23px;background:#007acc"></div>
<svg style="left:4px;top:1143px" width="16" height="12" viewBox="0 0 16 12"><path d="M3.500 .5H15L12.500 11.500H1Z" fill="none" stroke="#fff"/></svg>
<div class="a w" style="left:28px;top:1141px">Ready</div>
<div class="a w" style="left:840px;top:1141px">Ln 12</div>
<div class="a w" style="left:933px;top:1141px">Col 1</div>
<div class="a w" style="left:1024px;top:1141px">Ch 1</div>
<div class="a w" style="left:1160px;top:1141px">INS</div>
<svg style="left:1307px;top:1143px" width="10" height="12" viewBox="0 0 10 12"><path d="M5 12V2M1 6L5 1L9 6" fill="none" stroke="#dce6f0" stroke-width="2"/></svg>
<div class="a w" style="left:1326px;top:1141px">17</div>
<svg style="left:1362px;top:1143px" width="12" height="12" viewBox="0 0 12 12"><path d="M1 11L2 7L8 1L11 4L5 10Z" fill="#dce6f0"/></svg>
<div class="a w" style="left:1382px;top:1141px">2</div>
<svg style="left:1411px;top:1142px" width="14" height="14" viewBox="0 0 14 14"><path d="M7 0L14 7L7 14L0 7Z" fill="#e8eef4"/><path d="M5 3L9 7V10M5 5V10" stroke="#007acc"/></svg>
<div class="a w" style="left:1432px;top:1141px">WebApi-1</div>
<svg style="left:1508px;top:1142px" width="14" height="14" viewBox="0 0 14 14"><circle cx="2.500" cy="2.500" r="2" fill="#e8eef4"/><circle cx="11.500" cy="2.500" r="2" fill="#e8eef4"/><circle cx="7" cy="12" r="2" fill="#e8eef4"/><path d="M2.500 3L7 8L11.500 3M7 8V11" stroke="#e8eef4" stroke-width="1.500" fill="none"/></svg>
<div class="a w" style="left:1530px;top:1141px">master</div>
<div class="b" style="left:1571px;top:1146px;border-left:4px solid transparent;border-right:4px solid transparent;border-bottom:4px solid #fff"></div>

<!-- taskbar -->
<div class="b" style="left:0;top:1160px;width:1600px;height:40px;background:#1c1c1a"></div>
<div class="b" style="left:637px;top:1160px;width:43px;height:40px;background:#484848"></div>
<div class="b" style="left:677px;top:1160px;width:2px;height:40px;background:#2e2e2e"></div>
<div class="ul" style="left:103px;width:36px"></div><div class="ul" style="left:148px;width:36px"></div><div class="ul" style="left:193px;width:36px"></div><div class="ul" style="left:238px;width:36px"></div><div class="ul" style="left:335px;width:29px"></div><div class="ul" style="left:463px;width:36px"></div><div class="ul" style="left:508px;width:36px"></div><div class="ul" style="left:553px;width:35px"></div><div class="ul" style="left:637px;width:43px"></div><div class="ul" style="left:685px;width:35px"></div><div class="ul" style="left:905px;width:35px"></div><div class="ul" style="left:1125px;width:35px"></div><div class="ul" style="left:1169px;width:35px"></div><div class="ul" style="left:1213px;width:35px"></div>

<svg style="left:16px;top:1172px" width="17" height="17" viewBox="0 0 17 17"><path d="M0 2.500L7.500 1.500V8H0ZM8.500 1.300L17 0V8H8.500ZM0 9H7.500V15.500L0 14.500ZM8.500 9H17V17L8.500 15.700Z" fill="#fff"/></svg>
<svg style="left:63px;top:1172px" width="18" height="17" viewBox="0 0 18 17"><path d="M1 .5H11V2H1ZM1 15H11V16.500H1Z" fill="#fff"/><path d="M1.500 5.500H12.500V11.500H1.500Z" fill="none" stroke="#fff"/><rect x="14" y="0" width="3" height="3" fill="#fff"/><rect x="15" y="5" width="2" height="12" fill="#fff"/></svg>
<svg style="left:107px;top:1167px" width="28" height="28" viewBox="0 0 28 28"><circle cx="14" cy="15" r="11" fill="#e8452c"/><path d="M14 3Q24 5 25 15Q22 7 17 8Z" fill="#ffb029"/><circle cx="14" cy="16" r="6.500" fill="#3a4fc7"/><path d="M9 10Q15 8 20 14Q18 22 9 21Q16 18 9 10" fill="#f7941d"/></svg>
<svg style="left:154px;top:1170px" width="22" height="20" viewBox="0 0 22 20"><rect x="0" y="0" width="22" height="20" fill="#000" stroke="#888"/><rect x="0" y="0" width="22" height="3" fill="#aaa"/><path d="M3 7H8M3 10H6M12 11H19" stroke="#ddd"/></svg>
<svg style="left:197px;top:1167px" width="26" height="28" viewBox="0 0 26 28"><path d="M8 4L16 2L14 12L5 14Z" fill="#e06a28"/><path d="M16 7L24 4L22 14L14 16Z" fill="#6fb43a"/><path d="M14 16L22 14L18 24L10 26Z" fill="#e0a828"/><circle cx="8" cy="16" r="6" fill="#9fd0ea" stroke="#ddd" stroke-width="2"/></svg>
<svg style="left:244px;top:1171px" width="24" height="22" viewBox="0 0 24 22"><path d="M0 0H8L10 2H24V22H0Z" fill="#f6d47e"/><path d="M0 4H24V22H0Z" fill="#ffe29a"/><path d="M6 14L12 8L18 14V22H6Z" fill="#3fa6e6"/><rect x="10" y="17" width="4" height="5" fill="#ffe29a"/></svg>
<svg style="left:289px;top:1168px" width="24" height="24" viewBox="0 0 24 24"><rect x="0" y="0" width="24" height="24" fill="#1414b8"/><rect x="8" y="0" width="9" height="7" fill="#c8c8c8"/><rect x="11" y="1" width="2" height="5" fill="#1414b8"/><rect x="3" y="10" width="18" height="13" fill="#f0f0f0"/><path d="M3 12H21M3 15H21M3 18H21M3 21H21" stroke="#d02424" stroke-width="1.500"/></svg>
<svg style="left:335px;top:1169px" width="22" height="22" viewBox="0 0 22 22"><rect x=".5" y=".5" width="21" height="21" fill="#0c2440" stroke="#6f7f92"/></svg>
<div class="a" style="left:339px;top:1173px;font:bold 13px/14px 'Liberation Sans',sans-serif;color:#4fa8e6">Ps</div>
<svg style="left:378px;top:1168px" width="26" height="24" viewBox="0 0 26 24"><path d="M1 12L10 6L6 3L16 3Q24 5 24 13Q22 22 14 21Q7 20 8 14L3 17Z" fill="#ea7600"/><circle cx="16" cy="12" r="5" fill="#fff"/><circle cx="16" cy="12" r="3" fill="#265787"/></svg>
<svg style="left:423px;top:1168px" width="26" height="24" viewBox="0 0 26 24"><path d="M3 15V11Q3 1 13 1T23 11V15" fill="none" stroke="#0b1ee0" stroke-width="2"/><rect x="0" y="12" width="5" height="8" rx="2" fill="#0b1ee0"/><rect x="21" y="12" width="5" height="8" rx="2" fill="#0b1ee0"/><ellipse cx="13" cy="14" rx="7.500" ry="6" fill="#e8a020"/><rect x="6" y="12" width="14" height="3" fill="#d8301c"/></svg>
<svg style="left:469px;top:1168px" width="24" height="24" viewBox="0 0 24 24"><path d="M1 1H18L22 5V23H1Z" fill="#efefef" stroke="#999"/><path d="M4 19L9 11L14 15L18 10V21H4Z" fill="#70b830"/><path d="M20 1L16 13" stroke="#d08a2c" stroke-width="2"/><rect x="6" y="7" width="2" height="9" fill="#555"/></svg>
<svg style="left:513px;top:1169px" width="24" height="22" viewBox="0 0 24 22"><ellipse cx="12" cy="13" rx="10" ry="6" fill="#e8a020"/><ellipse cx="13" cy="14" rx="5" ry="4" fill="#1c1c1a"/><circle cx="13" cy="14" r="3.500" fill="none" stroke="#d02020" stroke-width="1.500"/><circle cx="5" cy="6" r="2" fill="#e8a020"/><circle cx="12" cy="4" r="2.500" fill="#e8a020"/><circle cx="20" cy="6" r="2" fill="#e8a020"/></svg>
<svg style="left:558px;top:1167px" width="26" height="26" viewBox="0 0 26 26"><rect x="1" y="1" width="8" height="9" fill="#f4c058"/><path d="M13 1H20V8M1 15V22H8" fill="none" stroke="#5aa02c" stroke-dasharray="2 1"/><path d="M10 12L22 24M22 12L12 22" stroke="#cfcfcf" stroke-width="2.500"/></svg>
<svg style="left:600px;top:1172px" width="26" height="16" viewBox="0 0 26 16"><path d="M12 8Q8 2 5 3T2 8T5 13T12 8T20 3T24 8T20 13T12 8" fill="none" stroke="#3a7cc8" stroke-width="3"/><path d="M13 8T20 3T24 8T20 13T13 8" fill="none" stroke="#5b3fc0" stroke-width="3"/></svg>
<svg style="left:645px;top:1167px" width="26" height="26" viewBox="0 0 26 26"><path d="M1 8L6 6L13 12L22 2L26 4V22L22 24L13 15L6 20L1 18Z" fill="#8661c5"/><path d="M22 8L16 13L22 18ZM5 10V16L9 13Z" fill="#484848"/></svg>
<svg style="left:689px;top:1168px" width="26" height="24" viewBox="0 0 26 24"><path d="M8 1H24L19 21L1 18Z" fill="#8fc5e8" stroke="#ddd"/><path d="M10 5H21M9 9H20M8 13H19" stroke="#d0e6f5"/></svg>
<svg style="left:733px;top:1168px" width="24" height="24" viewBox="0 0 24 24"><path d="M8 1H23V16H16V23H1V8H8Z" fill="#1c1c1a" stroke="#7ab62c" stroke-width="2.500"/><rect x="7" y="12" width="7" height="7" fill="#e8a030"/><rect x="12" y="6" width="7" height="7" fill="#e8a030"/></svg>
<svg style="left:779px;top:1169px" width="24" height="24" viewBox="0 0 24 24"><path d="M0 5L22 0L23 4L1 9Z" fill="#ddd"/><rect x="1" y="9" width="22" height="14" fill="#fff"/></svg>
<div class="a" style="left:782px;top:1178px;font:bold 11px/12px 'Liberation Sans',sans-serif"><span style="color:#d02020">3</span><span style="color:#2c8c2c">2</span><span style="color:#2050c0">1</span></div>
<svg style="left:822px;top:1169px" width="23" height="23" viewBox="0 0 23 23"><circle cx="11.500" cy="11.500" r="11.500" fill="#1d8fd6"/><path d="M1 13Q8 11 11.500 16Q15 11 22 13Q15 13 11.500 19Q8 13 1 13" fill="#fff"/></svg>
<svg style="left:865px;top:1167px" width="24" height="26" viewBox="0 0 24 26"><circle cx="8" cy="8" r="7" fill="#4a8ec0"/><path d="M2 4L8 1L13 6L8 11Z" fill="#e8a020"/><rect x="12" y="6" width="11" height="19" fill="#b8bcc0"/><path d="M14 10H21M14 13H21" stroke="#777"/></svg>
<svg style="left:911px;top:1168px" width="24" height="24" viewBox="0 0 24 24"><rect x="0" y="0" width="23" height="24" rx="3" fill="#2e2e2e"/></svg>
<div class="a" style="left:912px;top:1174px;font:bold 13px/14px 'Liberation Sans',sans-serif;color:#ccc"><span style="color:#4fa8e6;font-size:10px">m</span>R</div>
<svg style="left:954px;top:1171px" width="24" height="18" viewBox="0 0 24 18"><path d="M1 5L9 1H18L23 5V13L18 17H7L1 13Z" fill="#b8bcc8"/><path d="M10 1V17M17 1V17" stroke="#fff"/></svg>
<svg style="left:998px;top:1168px" width="24" height="24" viewBox="0 0 24 24"><path d="M2 3L20 4L13 22Z" fill="none" stroke="#000" stroke-width="5"/><path d="M3 5L18 5L12 20Z" fill="none" stroke="#5fb8ea" stroke-width="2"/><circle cx="3" cy="5" r="2.500" fill="#5fb8ea"/><circle cx="19" cy="4" r="2.500" fill="#5fb8ea"/><circle cx="12" cy="20" r="2.500" fill="#5fb8ea"/></svg>
<svg style="left:1042px;top:1168px" width="24" height="24" viewBox="0 0 24 24"><path d="M2 7L8 2L22 14L17 22ZM22 7L16 2L2 14L7 22ZM1 12L5 4M19 4L23 12" stroke="#efefef" stroke-width="4" fill="none"/></svg>
<svg style="left:1085px;top:1167px" width="25" height="26" viewBox="0 0 25 26"><path d="M1 8L5 6L12 12L20 2L24 4V22L20 24L12 15L5 20L1 18Z" fill="#6b2fbb"/><path d="M20 8L15 13L20 18ZM4 10V16L8 13Z" fill="#1c1c1a"/></svg>
<div class="a" style="left:1130px;top:1171px;width:24px;height:19px;background:#fff;border:2px solid #000;outline:1px solid #fff;font:bold 13px/15px 'Liberation Sans',sans-serif;color:#000;text-align:center">7z</div>
<svg style="left:1175px;top:1171px" width="22" height="18" viewBox="0 0 22 18"><rect x="0" y="0" width="22" height="18" fill="#eef1f5"/><path d="M8 4H20M8 9H20M8 14H20" stroke="#8f9aa8" stroke-width="1.500"/><rect x="2" y="2" width="4" height="4" fill="#6fa8d8"/><rect x="2" y="7" width="4" height="4" fill="#6fa8d8"/><rect x="2" y="12" width="4" height="4" fill="#6fa8d8"/></svg>
<svg style="left:1218px;top:1168px" width="24" height="24" viewBox="0 0 24 24"><rect x="0" y="0" width="24" height="24" fill="#b0170f"/></svg>
<div class="a" style="left:1221px;top:1172px;font:italic bold 16px/17px 'Liberation Sans',sans-serif;color:#fff">Fz</div>

<svg style="left:1261px;top:1175px" width="13" height="8" viewBox="0 0 13 8"><path d="M.5 7L6.500 1L12.500 7" fill="none" stroke="#fff" stroke-width="1.200"/></svg>
<svg style="left:1284px;top:1172px" width="15" height="16" viewBox="0 0 15 16"><rect x="0" y="0" width="14" height="16" rx="3" fill="#a8c8e0"/><path d="M2 4H12L2 8H12L2 12H12" stroke="#fff" fill="none"/></svg>
<svg style="left:1307px;top:1173px" width="17" height="14" viewBox="0 0 17 14"><path d="M4.500 2.500H16.500V10.500H4.500ZM10 10.500V13M6 13.500H14" fill="none" stroke="#fff"/><rect x="0" y="0" width="5" height="5" fill="#fff"/></svg>
<svg style="left:1331px;top:1172px" width="16" height="16" viewBox="0 0 16 16"><circle cx="8" cy="8" r="8" fill="#a8cc64"/><path d="M5 12L11 3" stroke="#fff" stroke-width="2"/></svg>
<svg style="left:1357px;top:1171px" width="10" height="17" viewBox="0 0 10 17"><rect x=".5" y=".5" width="9" height="16" rx="3" fill="#d8d8d8"/><path d="M0 5H10" stroke="#999"/></svg>
<svg style="left:1379px;top:1173px" width="16" height="13" viewBox="0 0 16 13"><path d="M1 4.500H4L7 1.500V11.500L4 8.500H1ZM9.500 3.500Q11 6.500 9.500 9.500M12 2Q14 6.500 12 11" fill="none" stroke="#fff"/></svg>
<svg style="left:1403px;top:1172px" width="16" height="15" viewBox="0 0 16 15"><path d="M10 1L16 7.500L10 14L4 7.500Z" fill="#e8202a"/><path d="M4 3L1 7.500L4 12" fill="none" stroke="#aaa"/></svg>
<svg style="left:1427px;top:1172px" width="16" height="16" viewBox="0 0 16 16"><rect x="0" y="0" width="16" height="16" fill="#8fd89a"/><path d="M1 5L5 3L8 6L12 2L15 5" stroke="#2a7a3a" fill="none"/><path d="M1 15L8 14L11 9L15 8" stroke="#d02020" fill="none"/></svg>
<div class="a w" style="left:1453px;top:1172px">ENG</div>
<div class="a w" style="left:1483px;top:1163px;width:62px;text-align:center">11:27 PM</div>
<div class="a w" style="left:1483px;top:1181px;width:62px;text-align:center">11/11/2018</div>
<svg style="left:1559px;top:1172px" width="16" height="16" viewBox="0 0 16 16"><path d="M.5 .5H15.500V12.500H11L8 15.500L7 12.500H.5Z" fill="none" stroke="#fff"/></svg>
</body></html>
